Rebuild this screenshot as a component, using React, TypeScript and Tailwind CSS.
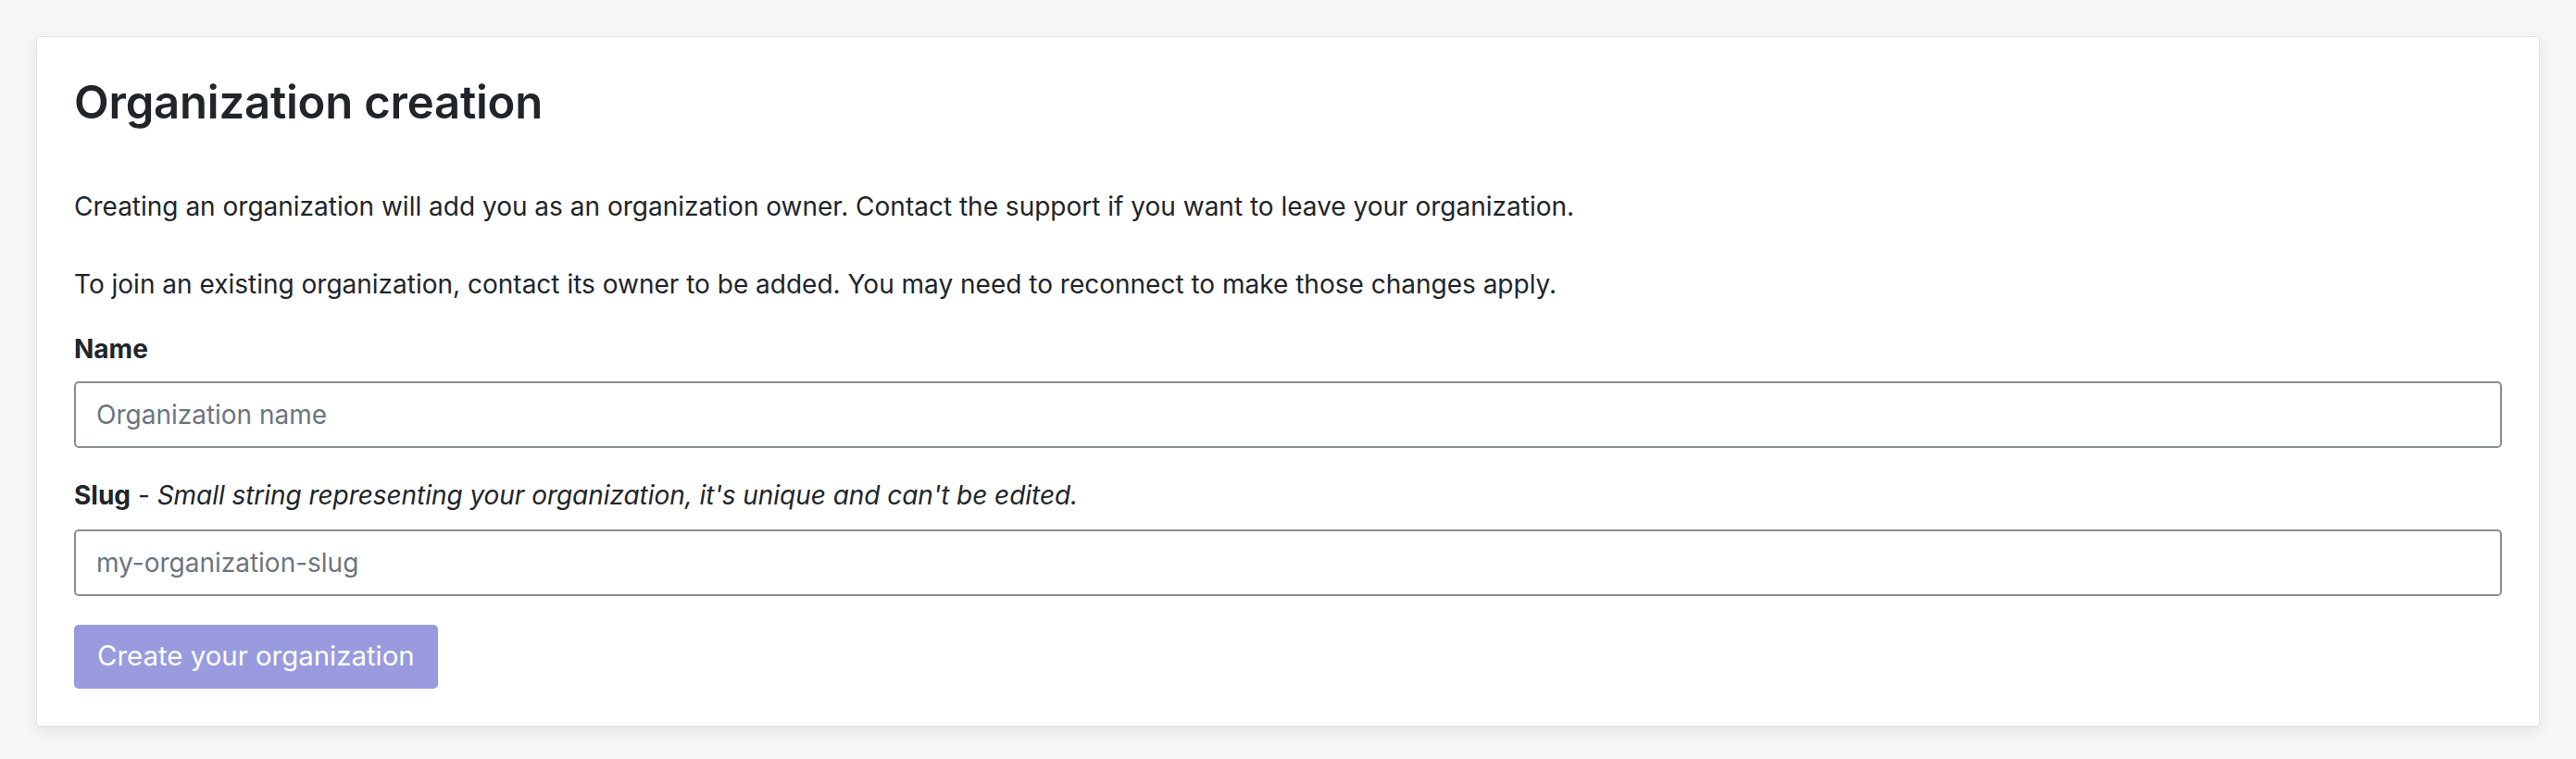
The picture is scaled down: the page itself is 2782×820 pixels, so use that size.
export default function App() {
  return (
    <div className="min-h-[820px] bg-[#f6f6f6] px-[39px] pt-[39px] font-['Inter',sans-serif] text-[#212529]">
      <div className="rounded-[4px] border border-[#e2e2e2] bg-white px-[40px] pt-[41px] pb-[40px] shadow-[0_6px_14px_rgba(0,0,0,0.08)]">
        <h1 className="mb-[61px] text-[49px] font-semibold leading-[60px] tracking-[-0.2px]">Organization creation</h1>

        <p className="mb-[42px] text-[28px] leading-[42px]">
          Creating an organization will add you as an organization owner. Contact the support if you want to leave your organization.
        </p>
        <p className="text-[28px] leading-[42px]">
          To join an existing organization, contact its owner to be added. You may need to reconnect to make those changes apply.
        </p>

        <form className="mt-[28px]">
          <label htmlFor="org-name" className="mb-[14px] block text-[28px] font-bold leading-[42px]">Name</label>
          <input
            id="org-name"
            type="text"
            placeholder="Organization name"
            className="block h-[72px] w-full rounded-[5px] border-2 border-[#8a8e93] px-[22px] text-[28px] placeholder:text-[#6c757d] focus:outline-none"
          />

          <label htmlFor="org-slug" className="mt-[30px] mb-[16px] block text-[28px] leading-[42px]">
            <span className="font-bold">Slug</span> - <em className="tracking-[-0.05px]">Small string representing your organization, it's unique and can't be edited.</em>
          </label>
          <input
            id="org-slug"
            type="text"
            placeholder="my-organization-slug"
            className="block h-[72px] w-full rounded-[5px] border-2 border-[#8a8e93] px-[22px] text-[28px] placeholder:text-[#6c757d] focus:outline-none"
          />

          <button
            type="submit"
            disabled
            className="mt-[31px] h-[69px] rounded-[5px] bg-[#999bde] px-[25px] text-[29.4px] text-white"
          >
            Create your organization
          </button>
        </form>
      </div>
    </div>
  )
}
